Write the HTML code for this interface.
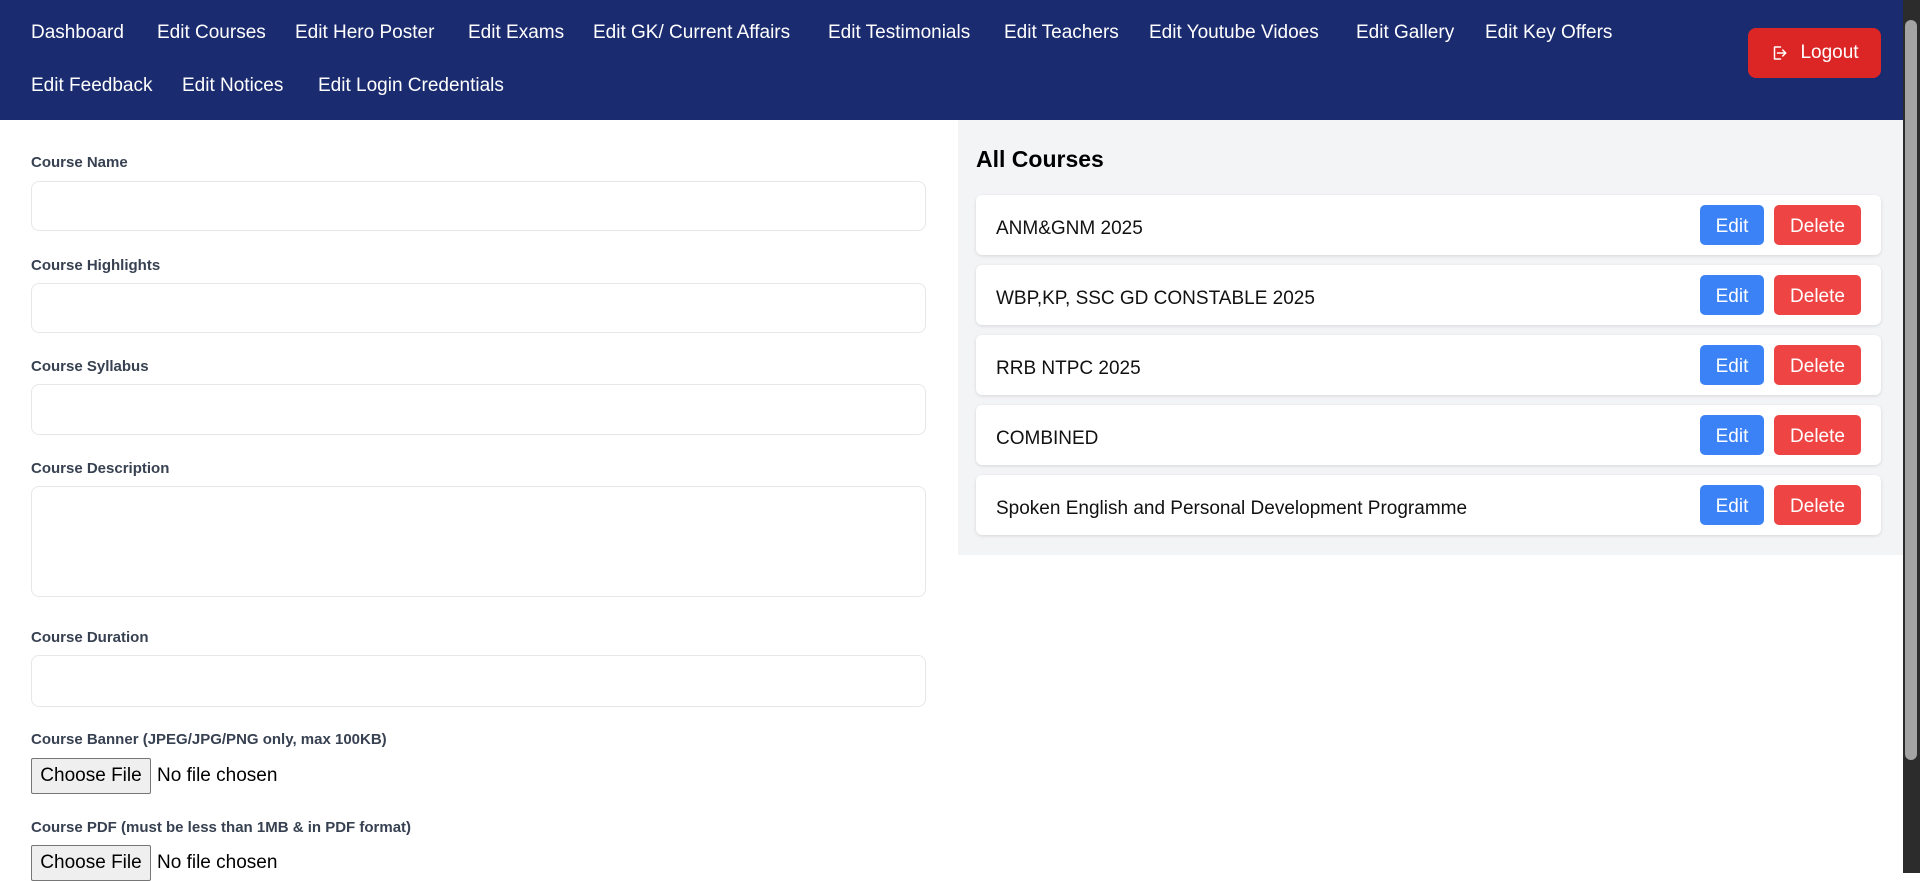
<!DOCTYPE html>
<html><head><meta charset="utf-8"><style>
*{box-sizing:border-box;margin:0;padding:0}
body{width:1920px;height:873px;overflow:hidden;font-family:"Liberation Sans",sans-serif;background:#fff;position:relative}
.hdr{position:absolute;left:0;top:0;width:1903px;height:120px;background:#1b2b6f}
.nav{position:absolute;color:#fff;font-size:19px;line-height:22px}
.logout{position:absolute;left:1748px;top:28px;width:133px;height:50px;background:#dc2626;border-radius:8px;color:#fff;font-size:19px;display:flex;align-items:center;justify-content:center;gap:12px}
.sb{position:absolute;left:1903px;top:0;width:17px;height:873px;background:#2c2c2c}
.thumb{position:absolute;left:1905px;top:20px;width:12px;height:740px;background:#a3a3a3;border-radius:6px}
.lbl{position:absolute;left:31px;font-size:15px;font-weight:600;color:#374151;line-height:20px}
.inp{position:absolute;left:31px;width:895px;border:1px solid #e5e7eb;border-radius:8px;background:#fff}
.fb{position:absolute;left:31px;height:36px;width:120px;background:#efefef;border:1px solid #767676;border-radius:2px;font-size:19px;line-height:34px;text-align:center;color:#000}
.nf{position:absolute;left:157px;font-size:19px;line-height:36px;color:#000}
.right{position:absolute;left:958px;top:120px;width:945px;height:435px;background:#f3f4f6}
.card{position:absolute;left:976px;width:905px;height:60px;background:#fff;border-radius:6px;box-shadow:0 1px 3px rgba(0,0,0,.12)}
.card span{position:absolute;left:20px;top:4px;line-height:60px;font-size:19px;color:#111}
.e{position:absolute;left:724px;top:10px;width:64px;height:40px;background:#3b82f6;color:#fff;border-radius:5px;font-size:19px;line-height:44px;text-align:center}
.d{position:absolute;left:798px;top:10px;width:87px;height:40px;background:#ef4444;color:#fff;border-radius:5px;font-size:19px;line-height:44px;text-align:center}
</style></head><body>
<div class="hdr"></div>
<div class="nav" style="left:31px;top:22px">Dashboard</div>
<div class="nav" style="left:157px;top:22px">Edit Courses</div>
<div class="nav" style="left:295px;top:22px">Edit Hero Poster</div>
<div class="nav" style="left:468px;top:22px">Edit Exams</div>
<div class="nav" style="left:593px;top:22px">Edit GK/ Current Affairs</div>
<div class="nav" style="left:828px;top:22px">Edit Testimonials</div>
<div class="nav" style="left:1004px;top:22px">Edit Teachers</div>
<div class="nav" style="left:1149px;top:22px">Edit Youtube Vidoes</div>
<div class="nav" style="left:1356px;top:22px">Edit Gallery</div>
<div class="nav" style="left:1485px;top:22px">Edit Key Offers</div>
<div class="nav" style="left:31px;top:75px">Edit Feedback</div>
<div class="nav" style="left:182px;top:75px">Edit Notices</div>
<div class="nav" style="left:318px;top:75px">Edit Login Credentials</div>
<div class="logout"><svg width="18" height="18" viewBox="0 0 24 24" fill="none" stroke="#fff" stroke-width="2" stroke-linecap="round" stroke-linejoin="round"><path d="M14 4H6v16h8M10 12h11M17 8l4 4-4 4"/></svg>Logout</div>
<div class="sb"></div><div class="thumb"></div>

<div class="lbl" style="top:153px">Course Name</div>
<div class="inp" style="top:181px;height:50px"></div>
<div class="lbl" style="top:256px">Course Highlights</div>
<div class="inp" style="top:283px;height:50px"></div>
<div class="lbl" style="top:357px">Course Syllabus</div>
<div class="inp" style="top:384px;height:51px"></div>
<div class="lbl" style="top:459px">Course Description</div>
<div class="inp" style="top:486px;height:111px"></div>
<div class="lbl" style="top:628px">Course Duration</div>
<div class="inp" style="top:655px;height:52px"></div>
<div class="lbl" style="top:730px">Course Banner (JPEG/JPG/PNG only, max 100KB)</div>
<div class="fb" style="top:758px">Choose File</div><div class="nf" style="top:758px">No file chosen</div>
<div class="lbl" style="top:818px">Course PDF (must be less than 1MB &amp; in PDF format)</div>
<div class="fb" style="top:845px">Choose File</div><div class="nf" style="top:845px">No file chosen</div>

<div class="right"></div>
<div style="position:absolute;left:976px;top:146px;font-size:23px;font-weight:bold;color:#000">All Courses</div>
<div class="card" style="top:195px"><span>ANM&amp;GNM 2025</span><div class="e">Edit</div><div class="d">Delete</div></div>
<div class="card" style="top:265px"><span>WBP,KP, SSC GD CONSTABLE 2025</span><div class="e">Edit</div><div class="d">Delete</div></div>
<div class="card" style="top:335px"><span>RRB NTPC 2025</span><div class="e">Edit</div><div class="d">Delete</div></div>
<div class="card" style="top:405px"><span>COMBINED</span><div class="e">Edit</div><div class="d">Delete</div></div>
<div class="card" style="top:475px"><span>Spoken English and Personal Development Programme</span><div class="e">Edit</div><div class="d">Delete</div></div>
</body></html>
